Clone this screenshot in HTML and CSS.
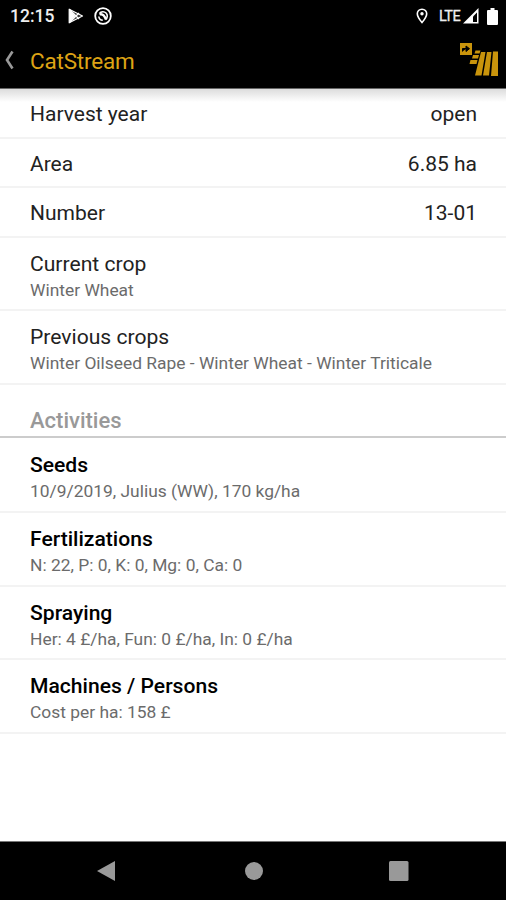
FILE: index.html
```html
<!DOCTYPE html>
<html lang="en">
<head>
    <meta charset="UTF-8">
    <title>CatStream</title>
    <link rel="stylesheet" href="styles.css">
</head>
<body>
    <div class="status-bar">
        <span class="clock">12:15</span>
        <svg class="icon-play" width="16" height="16" viewBox="0 0 16 16">
            <path d="M1.200 1.200v13.600L14.500 8z" fill="#333" stroke="#fff" stroke-width="1.200" stroke-linejoin="round"/>
            <path d="M1.200 1.200v13.600L7.500 8z" fill="#fff"/>
            <path d="M1.500 1.500L11 11M1.500 14.500L11 5" stroke="#fff" stroke-width="1.400"/>
        </svg>
        <svg class="icon-radar" width="18" height="18" viewBox="0 0 18 18">
            <circle cx="9" cy="9" r="7.800" fill="none" stroke="#fff" stroke-width="1.800"/>
            <path d="M5.500 6.500a4.300 4.300 0 1 1 6 6M4.800 9.500a4.300 4.300 0 0 0 4 3.800" fill="none" stroke="#fff" stroke-width="1.600"/>
            <path d="M5.500 7.500q4-1.500 6.500 5" fill="none" stroke="#fff" stroke-width="2.400"/>
        </svg>
        <div class="status-right">
            <svg class="icon-pin" width="12" height="16" viewBox="0 0 12 16">
                <path d="M6 1.200C3.200 1.200 1.300 3.200 1.300 5.800 1.300 9 6 14.600 6 14.600S10.700 9 10.700 5.800C10.700 3.200 8.800 1.200 6 1.200z" fill="none" stroke="#fff" stroke-width="1.600"/>
                <circle cx="6" cy="5.800" r="1.700" fill="#fff"/>
            </svg>
            <span class="network">LTE</span>
            <svg class="icon-signal" width="16" height="16" viewBox="0 0 16 16">
                <path d="M15.500 0v15.500H0z" fill="#fff"/>
                <path d="M14 4.500V14h-4V8.500z" fill="#000"/>
            </svg>
            <svg class="icon-battery" width="11" height="17" viewBox="0 0 11 17">
                <path d="M3.500 0h4v2H10q1 0 1 1v13q0 1-1 1H1q-1 0-1-1V3q0-1 1-1h2.500z" fill="#fff"/>
            </svg>
        </div>
    </div>

    <div class="app-bar">
        <svg class="back" width="10" height="20" viewBox="0 0 10 20">
            <path d="M8.500 1.500L3 10l5.500 8.500" fill="none" stroke="#999" stroke-width="2.600"/>
        </svg>
        <h1>CatStream</h1>
        <svg class="logo" width="40" height="35" viewBox="0 0 40 35">
            <path d="M1 0h12v12H1z" fill="#c9940c"/>
            <path d="M3.500 8.500V5.500h4M7 3l3.500 2.700L7 8.500z" fill="#000" stroke="#000" stroke-width="1"/>
            <path d="M16.500 7.500h5l-1 3h-5zM14 12h6l-1 3.500h-6zM11.500 17h7l-1 4h-7z" fill="#c9940c"/>
            <path d="M22 9h4.500l-4 23.500H16zM28 9h4.500l-2.500 23.500h-6zM34 8.500h5V33h-7z" fill="#c9940c"/>
        </svg>
    </div>

    <div class="content">
        <div class="row"><span>Harvest year</span><span>open</span></div>
        <div class="row"><span>Area</span><span>6.85 ha</span></div>
        <div class="row"><span>Number</span><span>13-01</span></div>
        <div class="item">
            <div class="title">Current crop</div>
            <div class="detail">Winter Wheat</div>
        </div>
        <div class="item">
            <div class="title">Previous crops</div>
            <div class="detail">Winter Oilseed Rape - Winter Wheat - Winter Triticale</div>
        </div>

        <h2>Activities</h2>
        <div class="activities">
            <div class="item">
                <div class="title">Seeds</div>
                <div class="detail">10/9/2019, Julius (WW), 170 kg/ha</div>
            </div>
            <div class="item">
                <div class="title">Fertilizations</div>
                <div class="detail">N: 22, P: 0, K: 0, Mg: 0, Ca: 0</div>
            </div>
            <div class="item">
                <div class="title">Spraying</div>
                <div class="detail">Her: 4 £/ha, Fun: 0 £/ha, In: 0 £/ha</div>
            </div>
            <div class="item">
                <div class="title">Machines / Persons</div>
                <div class="detail">Cost per ha: 158 £</div>
            </div>
        </div>
    </div>

    <div class="nav-bar">
        <svg width="18" height="20" viewBox="0 0 18 20"><path d="M0 10L18 0v20z" fill="#999"/></svg>
        <svg class="home" width="18" height="18" viewBox="0 0 18 18"><circle cx="9" cy="9" r="9" fill="#999"/></svg>
        <svg width="20" height="20" viewBox="0 0 20 20"><rect width="19.500" height="20" rx="1.500" fill="#999"/></svg>
    </div>
</body>
</html>
```
FILE: styles.css
```css
* {
    box-sizing: border-box;
}

body {
    margin: 0;
    height: 900px;
    display: flex;
    flex-direction: column;
    font-family: Roboto, sans-serif;
    background: #fff;
    color: #222;
    overflow: hidden;
}

/* Top bars */
.status-bar {
    height: 32px;
    display: flex;
    align-items: center;
    padding: 0 8px 0 10px;
    background: #000;
    color: #eee;
}

.clock {
    width: 44px;
    font-size: 17.5px;
    font-weight: 500;
}

.icon-play {
    margin-left: 14px;
}

.icon-radar {
    margin-left: 10px;
}

.status-right {
    display: flex;
    align-items: center;
    margin-left: auto;
}

.network {
    margin-left: 11px;
    width: 23px;
    font-size: 14.5px;
    letter-spacing: -0.5px;
    -webkit-text-stroke: 0.3px #eee;
}

.icon-signal {
    margin-left: 1px;
}

.icon-battery {
    margin-left: 8px;
}

.app-bar {
    height: 57px;
    display: flex;
    align-items: center;
    padding: 0 7px 0 4px;
    background: #000;
    border-bottom: 1px solid #666;
}

.app-bar h1 {
    margin: 0 auto 0 16px;
    padding-top: 1px;
    font-size: 22.5px;
    font-weight: 400;
    letter-spacing: -0.2px;
    color: #dda315;
}

/* Field details */
.content {
    flex: 1;
    background: linear-gradient(#dcdcdc, #fff 13px);
}

.row {
    height: 49.5px;
    display: flex;
    justify-content: space-between;
    padding: 0 29px 0 30px;
    border-bottom: 2px solid #f3f3f3;
    font-size: 21px;
    line-height: 51px;
}

.item {
    height: 73.8px;
    padding: 13px 30px 0;
    border-bottom: 2px solid #f3f3f3;
}

.title {
    font-size: 21.1px;
    line-height: 26px;
}

.detail {
    font-size: 17.4px;
    line-height: 26px;
    color: #6b6b6b;
    white-space: nowrap;
}

h2 {
    height: 52.500px;
    margin: 0;
    padding: 22px 30px 0;
    border-bottom: 2px solid #ccc;
    font-size: 22px;
    font-weight: 500;
    line-height: 28px;
    color: #999;
}

.activities {
    padding-top: 1.5px;
}

.activities .title {
    font-weight: 500;
    color: #000;
}

/* System navigation */
.nav-bar {
    height: 59px;
    display: flex;
    align-items: center;
    justify-content: space-between;
    padding: 0 97px;
    background: #000;
    border-top: 1px solid #777;
}

.nav-bar .home {
    margin-left: 3px;
}
```
